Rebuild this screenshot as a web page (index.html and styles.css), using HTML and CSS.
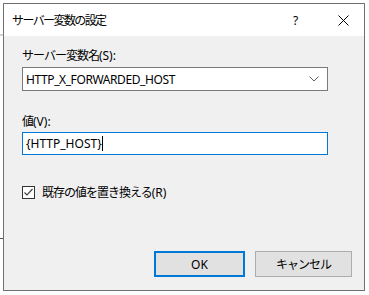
FILE: index.html
```html
<!DOCTYPE html>
<html lang="ja">
<head>
    <meta charset="UTF-8">
    <title>サーバー変数の設定</title>
    <link rel="stylesheet" href="styles.css">
</head>
<body>
    <div class="backdrop">
        <div class="dialog">
            <header class="titlebar">
                <span class="title">サーバー変数の設定</span>
                <span class="help">?</span>
                <svg class="close" width="11" height="11" viewBox="0 0 11 11">
                    <path d="M0.5 0.5 L10.5 10.5 M10.5 0.5 L0.5 10.5" stroke="#000" stroke-width="1" fill="none"/>
                </svg>
            </header>

            <div class="content">
                <label class="field-label"><span class="jp">サーバー変数名</span>(S):</label>
                <div class="combo">
                    <span class="combo-text">HTTP_X_FORWARDED_HOST</span>
                    <svg class="chevron" width="10" height="6" viewBox="0 0 10 6">
                        <path d="M0.5 0.5 L5 5 L9.5 0.5" stroke="#606060" stroke-width="1" fill="none"/>
                    </svg>
                </div>

                <label class="field-label value-label"><span class="jp">値</span>(V):</label>
                <div class="textbox">
                    <span>{HTTP_HOST}</span><span class="caret"></span>
                </div>

                <div class="check-row">
                    <span class="checkbox">
                        <svg width="11" height="11" viewBox="0 0 11 11">
                            <path d="M1.5 5.5 L4 8 L9.5 2" stroke="#444" stroke-width="1.2" fill="none"/>
                        </svg>
                    </span>
                    <span class="check-label"><span class="jp">既存の値を置き換える</span>(R)</span>
                </div>

                <div class="buttons">
                    <button class="btn btn-default">OK</button>
                    <button class="btn btn-cancel">キャンセル</button>
                </div>
            </div>
        </div>
    </div>
</body>
</html>
```

FILE: styles.css
```css
body {
    margin: 0;
    background: #fff;
    font-family: "Noto Sans", "Noto Sans CJK JP", sans-serif;
    font-size: 12px;
    color: #000;
}

.backdrop {
    width: 369px;
    height: 295px;
    padding: 3px 0 0 3px;
    box-sizing: border-box;
    background:
        linear-gradient(#d4d4d4, #d4d4d4) 0 34px / 3px 2px no-repeat,
        linear-gradient(#555, #555) 0 238px / 3px 1px no-repeat,
        #fff;
}

.dialog {
    width: 362px;
    height: 288px;
    box-sizing: border-box;
    border: 1px solid #707070;
    background: #f0f0f0;
    display: flex;
    flex-direction: column;
}

.titlebar {
    height: 32px;
    background: #fff;
    display: flex;
    align-items: center;
    padding: 0 0 0 8px;
}

.title {
    flex: 1;
    letter-spacing: -1.6px;
}

.help {
    width: 14px;
    margin-right: 31px;
    font-size: 12px;
}

.close {
    margin-right: 15px;
}

.content {
    flex: 1;
    padding: 12px 12px 0 18px;
    display: flex;
    flex-direction: column;
}

.field-label {
    line-height: 16px;
}

.jp {
    letter-spacing: -1px;
}

.combo {
    margin-top: 3px;
    width: 306px;
    height: 24px;
    box-sizing: border-box;
    border: 1px solid #7a7a7a;
    background: #fff;
    display: flex;
    align-items: center;
    padding: 0 8px 0 3px;
}

.combo-text {
    flex: 1;
    letter-spacing: -0.4px;
}

.value-label {
    margin-top: 23px;
}

.textbox {
    margin-top: 2px;
    width: 306px;
    height: 23px;
    box-sizing: border-box;
    border: 1px solid #0078d7;
    background: #fff;
    display: flex;
    align-items: center;
    padding: 0 3px;
}

.caret {
    width: 1px;
    height: 15px;
    background: #000;
}

.check-row {
    margin-top: 28px;
    display: flex;
    align-items: center;
    gap: 7px;
}

.checkbox {
    width: 13px;
    height: 13px;
    box-sizing: border-box;
    border: 1px solid #333;
    background: #fff;
    display: grid;
    place-content: center;
}

.buttons {
    margin-top: auto;
    margin-bottom: 13px;
    display: flex;
    justify-content: flex-end;
    gap: 10px;
}

.btn {
    height: 26px;
    box-sizing: border-box;
    background: #e1e1e1;
    border: 1px solid #adadad;
    font-family: inherit;
    font-size: 12px;
    color: #000;
    padding: 0;
}

.btn-default {
    width: 91px;
    border: 2px solid #0078d7;
}

.btn-cancel {
    width: 97px;
    letter-spacing: -1px;
}
```
